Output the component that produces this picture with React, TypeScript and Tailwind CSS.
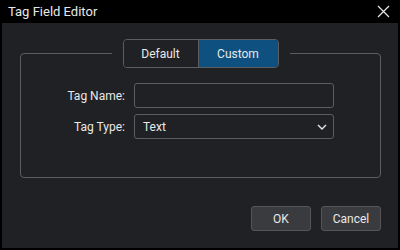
import { useState } from "react";

const font = { fontFamily: "Roboto, 'Noto Sans', sans-serif" };

const ChevronDown = () => (
  <svg width="10" height="6" viewBox="0 0 10 6" fill="none">
    <path d="M1 1l4 4 4-4" stroke="#e6e6e6" strokeWidth="1.4" />
  </svg>
);

const CloseIcon = () => (
  <svg width="13" height="13" viewBox="0 0 13 13" fill="none">
    <path d="M1 1l11 11M12 1L1 12" stroke="#e8e8e8" strokeWidth="1.2" />
  </svg>
);

export default function App() {
  const [mode, setMode] = useState<"default" | "custom">("custom");
  const [name, setName] = useState("");

  return (
    <div className="w-[400px] h-[250px] flex flex-col bg-black text-[#e8e8e8]" style={font}>
      <div className="h-[23px] flex items-center justify-between pl-[8px] pr-[10px]">
        <span className="text-[13px] leading-none">Tag Field Editor</span>
        <CloseIcon />
      </div>
      <div className="flex-1 mx-[2px] mb-[2px] bg-[#202124] flex flex-col">
        <fieldset className="mt-[16px] ml-[18px] w-[361px] border border-[#5c5d60] rounded-[4px] pb-[38px] min-w-0">
          <legend className="mx-auto px-[11px]">
            <div className="flex h-[29px] rounded-[4px] border border-[#5c5d60] overflow-hidden text-[12px]">
              <button
                onClick={() => setMode("default")}
                className={`w-[75px] ${mode === "default" ? "bg-[#0e5080]" : "bg-[#202124]"} border-r border-[#5c5d60]`}
              >
                Default
              </button>
              <button
                onClick={() => setMode("custom")}
                className={`w-[79px] ${mode === "custom" ? "bg-[#0e5080]" : "bg-[#202124]"}`}
              >
                Custom
              </button>
            </div>
          </legend>
          <div className="mt-[15px] flex flex-col gap-[6px] text-[12px]">
            <div className="flex items-center gap-[9px]">
              <label className="w-[104px] text-right">Tag Name:</label>
              <input
                value={name}
                onChange={(e) => setName(e.target.value)}
                className="w-[200px] h-[25px] rounded-[3px] border border-[#5c5d60] bg-[#202124] px-[8px] outline-none"
              />
            </div>
            <div className="flex items-center gap-[9px]">
              <label className="w-[104px] text-right">Tag Type:</label>
              <div className="w-[200px] h-[25px] rounded-[3px] border border-[#5c5d60] flex items-center justify-between pl-[8px] pr-[6px]">
                <span>Text</span>
                <ChevronDown />
              </div>
            </div>
          </div>
        </fieldset>
        <div className="mt-[28px] flex justify-end gap-[10px] pr-[17px] text-[12px]">
          <button className="w-[60px] h-[25px] rounded-[3px] border border-[#55565a] bg-[#3a3b3e]">OK</button>
          <button className="w-[60px] h-[25px] rounded-[3px] border border-[#55565a] bg-[#3a3b3e]">Cancel</button>
        </div>
      </div>
    </div>
  );
}
